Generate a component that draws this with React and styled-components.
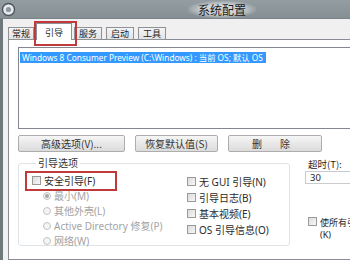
import React from 'react';
import styled, { createGlobalStyle } from 'styled-components';

const GlobalStyle = createGlobalStyle`
  html, body {
    margin: 0;
    padding: 0;
    width: 350px;
    height: 260px;
    overflow: hidden;
    background: #f0f0f0;
  }
  body {
    font-family: "Noto Sans", "Noto Sans CJK SC", sans-serif;
    font-size: 10px;
    color: #1e1e1e;
  }
`;

const Window = styled.div`
  width: 444px;
  height: 260px;
  display: flex;
  flex-direction: column;
  background: #f0f0f0;
`;

const TitleBar = styled.div`
  height: 18px;
  flex: none;
  display: flex;
  align-items: center;
  justify-content: center;
  position: relative;
  background: linear-gradient(180deg, #949da2 0%, #868f94 100%);
  border-bottom: 1px solid #7b8488;
`;

const AppIcon = styled.svg`
  position: absolute;
  left: 1px;
  top: 2px;
`;

const Title = styled.div`
  font-family: "Noto Sans CJK SC", sans-serif;
  font-size: 12px;
  line-height: 17px;
  padding: 0 10px;
  color: #202020;
  background: radial-gradient(ellipse at center, rgba(210, 216, 218, 0.95) 40%, rgba(150, 159, 163, 0) 75%);
`;

const Body = styled.div`
  flex: 1;
  display: flex;
  flex-direction: column;
  border-left: 3px solid #6f787c;
  padding: 4px 0 0 5px;
`;

const Tabs = styled.div`
  display: flex;
  align-items: flex-end;
  height: 17px;
  position: relative;
  z-index: 1;
`;

const Tab = styled.div`
  height: ${(p) => (p.$active ? 17 : 13)}px;
  padding: 0 ${(p) => (p.$active ? 8 : p.$first ? 3 : 4)}px;
  margin: 0 ${(p) => (p.$active ? 0 : 2)}px;
  margin-left: ${(p) => (p.$first || p.$active ? 0 : 2)}px;
  display: flex;
  align-items: center;
  font-family: "Noto Sans CJK SC", sans-serif;
  font-size: 9px;
  box-sizing: border-box;
  border: 1px solid #8e9196;
  border-bottom: ${(p) => (p.$active ? 'none' : '1px solid #8e9196')};
  background: ${(p) => (p.$active ? '#ffffff' : 'linear-gradient(180deg, #f4f4f4, #e3e3e3)')};
`;

const Highlight = styled.div`
  position: relative;
  display: flex;
  &::after {
    content: '';
    position: absolute;
    left: ${(p) => p.$l}px;
    right: ${(p) => p.$r}px;
    top: ${(p) => p.$t}px;
    bottom: ${(p) => p.$b}px;
    border: 2px solid #c0393b;
    pointer-events: none;
  }
`;

const Panel = styled.div`
  flex: 1;
  background: #ffffff;
  border: 1px solid #898c95;
  margin-top: -1px;
  padding: 7px 0 0 9px;
  display: flex;
  flex-direction: column;
`;

const ListBox = styled.div`
  width: 420px;
  height: 76px;
  border: 1px solid #828790;
  background: #ffffff;
  padding: 2px 1px;
`;

const ListItem = styled.div`
  display: inline-block;
  height: 11px;
  line-height: 11px;
  padding: 0 3px 0 2px;
  font-size: 8.3px;
  color: #ffffff;
  background: #3399ff;
  white-space: nowrap;
`;

const ButtonRow = styled.div`
  display: flex;
  gap: 10px;
  margin-top: 6px;
`;

const Button = styled.div`
  width: ${(p) => p.$w}px;
  height: 17px;
  box-sizing: border-box;
  border: 1px solid #adadad;
  border-radius: 2px;
  background: linear-gradient(180deg, #f6f6f6 0%, #e8e8e8 50%, #dcdcdc 100%);
  display: flex;
  align-items: center;
  justify-content: center;
  font-family: ${(p) => (p.$serif ? '"Noto Sans CJK SC", "Liberation Serif", serif' : '"Noto Sans CJK SC", sans-serif')};
  font-size: 10px;
  letter-spacing: ${(p) => p.$ls || 0}px;
  color: #333;
`;

const OptionsArea = styled.div`
  display: flex;
  margin-top: 5px;
`;

const GroupBox = styled.fieldset`
  width: 272px;
  height: 89px;
  margin: 0;
  padding: 4px 0 0 13px;
  box-sizing: border-box;
  border: 1px solid #dfe4e8;
  border-radius: 3px;
  display: flex;
`;

const Legend = styled.legend`
  padding: 0 2px;
  margin-left: 4px;
  font-family: "Noto Sans CJK SC", sans-serif;
  font-size: 10px;
  line-height: 12px;
  color: #333;
`;

const Column = styled.div`
  display: flex;
  flex-direction: column;
  width: ${(p) => p.$w}px;
`;

const Row = styled.div`
  display: flex;
  align-items: center;
  gap: 3px;
  height: ${(p) => p.$h || 15}px;
  padding-left: ${(p) => p.$indent || 0}px;
  font-size: 10px;
  white-space: nowrap;
  color: ${(p) => (p.$disabled ? '#a3a3a3' : '#2a2a2a')};
`;

const Check = styled.span`
  width: 9px;
  height: 9px;
  flex: none;
  box-sizing: border-box;
  border: 1px solid #9a9a9a;
  background: linear-gradient(135deg, #dcdcdc, #f7f7f7);
`;

const Radio = styled.span`
  width: 8px;
  height: 8px;
  flex: none;
  box-sizing: border-box;
  border-radius: 50%;
  border: 1px solid #c4c4c4;
  background: #f4f4f4;
  display: flex;
  align-items: center;
  justify-content: center;
  &::after {
    content: '';
    width: 4px;
    height: 4px;
    border-radius: 50%;
    background: ${(p) => (p.$on ? '#a8a8a8' : 'transparent')};
  }
`;

const SideColumn = styled.div`
  display: flex;
  flex-direction: column;
  margin-left: 15px;
`;

const FieldLabel = styled.div`
  font-family: "Noto Sans CJK SC", sans-serif;
  font-size: 9.5px;
  line-height: 12px;
  margin-top: 1px;
  padding-left: 3px;
`;

const Input = styled.div`
  width: 60px;
  height: 13px;
  box-sizing: border-box;
  margin-top: 1px;
  border: 1px solid #c8ccd0;
  padding-left: 4px;
  font-size: 9.5px;
  line-height: 11px;
`;

const WrapRow = styled.div`
  display: flex;
  align-items: flex-start;
  gap: 3px;
  margin-top: 33px;
  padding-left: 3px;
`;

const WrapText = styled.div`
  display: flex;
  flex-direction: column;
  font-size: 9px;
  line-height: 12px;
  white-space: nowrap;
`;

const App = () => (
  <>
    <GlobalStyle />
    <Window>
      <TitleBar>
        <AppIcon width="15" height="15" viewBox="0 0 15 15">
          <circle cx="7.5" cy="7.5" r="6" fill="#e6eaec" stroke="#4d565b" strokeWidth="1.4" />
          <circle cx="7.5" cy="7.5" r="2.6" fill="#8d979c" />
        </AppIcon>
        <Title>系统配置</Title>
      </TitleBar>
      <Body>
        <Tabs>
          <Tab $first>常规</Tab>
          <Highlight $l={-2} $r={-5} $t={-2} $b={-6}>
            <Tab $active>引导</Tab>
          </Highlight>
          <Tab>服务</Tab>
          <Tab>启动</Tab>
          <Tab>工具</Tab>
        </Tabs>
        <Panel>
          <ListBox>
            <ListItem>Windows 8 Consumer Preview (C:\Windows) : 当前 OS; 默认 OS</ListItem>
          </ListBox>
          <ButtonRow>
            <Button $w={107}>高级选项(V)...</Button>
            <Button $w={83} $serif>恢复默认值(S)</Button>
            <Button $w={94} $ls={8}>删 除</Button>
          </ButtonRow>
          <OptionsArea>
            <GroupBox>
              <Legend>引导选项</Legend>
              <Column $w={155}>
                <Highlight $l={-7} $r={70} $t={-2} $b={-3}>
                  <Row><Check />安全引导(F)</Row>
                </Highlight>
                <Row $indent={11} $disabled><Radio $on />最小(M)</Row>
                <Row $indent={11} $disabled><Radio />其他外壳(L)</Row>
                <Row $indent={11} $disabled><Radio />Active Directory 修复(P)</Row>
                <Row $indent={11} $disabled><Radio />网络(W)</Row>
              </Column>
              <Column $w={100}>
                <Row $h={16}><Check />无 GUI 引导(N)</Row>
                <Row $h={16}><Check />引导日志(B)</Row>
                <Row $h={16}><Check />基本视频(E)</Row>
                <Row $h={16}><Check />OS 引导信息(O)</Row>
              </Column>
            </GroupBox>
            <SideColumn>
              <FieldLabel>超时(T):</FieldLabel>
              <Input>30</Input>
              <WrapRow>
                <Check />
                <WrapText>
                  <span>使所有引</span>
                  <span>(K)</span>
                </WrapText>
              </WrapRow>
            </SideColumn>
          </OptionsArea>
        </Panel>
      </Body>
    </Window>
  </>
);

export default App;
